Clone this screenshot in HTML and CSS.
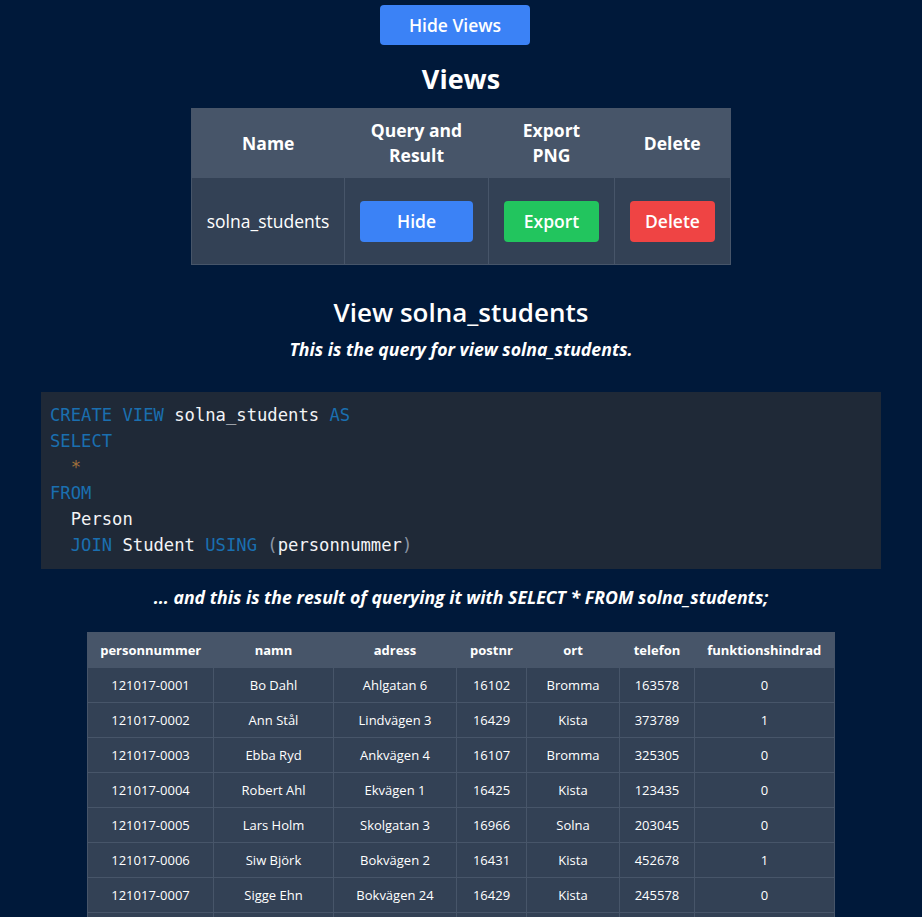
FILE: index.html
```html
<!DOCTYPE html>
<html lang="sv">
<head>
<meta charset="utf-8">
<title>Views</title>
<link rel="stylesheet" href="styles.css">
</head>
<body>
<main class="page">
  <button class="btn btn-blue btn-top">Hide Views</button>
  <h2 class="title">Views</h2>
  <table class="views">
    <colgroup>
      <col class="c-name"><col class="c-query"><col class="c-export"><col class="c-delete">
    </colgroup>
    <thead>
      <tr>
        <th>Name</th>
        <th>Query and<br>Result</th>
        <th>Export<br>PNG</th>
        <th>Delete</th>
      </tr>
    </thead>
    <tbody>
      <tr>
        <td>solna_students</td>
        <td><button class="btn btn-blue btn-cell btn-hide">Hide</button></td>
        <td><button class="btn btn-green btn-cell btn-export">Export</button></td>
        <td><button class="btn btn-red btn-cell btn-delete">Delete</button></td>
      </tr>
    </tbody>
  </table>

  <h2 class="title view-title">View solna_students</h2>
  <p class="caption">This is the query for view solna_students.</p>

  <pre class="code"><code><span class="kw">CREATE</span> <span class="kw">VIEW</span> solna_students <span class="kw">AS</span>
<span class="kw">SELECT</span>
  <span class="op">*</span>
<span class="kw">FROM</span>
  Person
  <span class="kw">JOIN</span> Student <span class="kw">USING</span> <span class="pn">(</span>personnummer<span class="pn">)</span></code></pre>

  <p class="caption caption-result">... and this is the result of querying it with SELECT * FROM solna_students;</p>

  <table class="result">
    <colgroup>
      <col class="r1"><col class="r2"><col class="r3"><col class="r4"><col class="r5"><col class="r6"><col class="r7">
    </colgroup>
    <thead>
      <tr>
        <th>personnummer</th>
        <th>namn</th>
        <th>adress</th>
        <th>postnr</th>
        <th>ort</th>
        <th>telefon</th>
        <th>funktionshindrad</th>
      </tr>
    </thead>
    <tbody>
      <tr><td>121017-0001</td><td>Bo Dahl</td><td>Ahlgatan 6</td><td>16102</td><td>Bromma</td><td>163578</td><td>0</td></tr>
      <tr><td>121017-0002</td><td>Ann Stål</td><td>Lindvägen 3</td><td>16429</td><td>Kista</td><td>373789</td><td>1</td></tr>
      <tr><td>121017-0003</td><td>Ebba Ryd</td><td>Ankvägen 4</td><td>16107</td><td>Bromma</td><td>325305</td><td>0</td></tr>
      <tr><td>121017-0004</td><td>Robert Ahl</td><td>Ekvägen 1</td><td>16425</td><td>Kista</td><td>123435</td><td>0</td></tr>
      <tr><td>121017-0005</td><td>Lars Holm</td><td>Skolgatan 3</td><td>16966</td><td>Solna</td><td>203045</td><td>0</td></tr>
      <tr><td>121017-0006</td><td>Siw Björk</td><td>Bokvägen 2</td><td>16431</td><td>Kista</td><td>452678</td><td>1</td></tr>
      <tr><td>121017-0007</td><td>Sigge Ehn</td><td>Bokvägen 24</td><td>16429</td><td>Kista</td><td>245578</td><td>0</td></tr>
      <tr><td>121017-0008</td><td>Ulla Berg</td><td>Ahlgatan 9</td><td>16102</td><td>Bromma</td><td>112233</td><td>0</td></tr>
    </tbody>
  </table>
</main>
</body>
</html>
```

FILE: styles.css
```css
* {
  box-sizing: border-box;
}

html, body {
  margin: 0;
  padding: 0;
  background: #00193a;
  color: #ffffff;
  font-family: "Open Sans", "Noto Sans", sans-serif;
  overflow: hidden;
}

.page {
  display: flex;
  flex-direction: column;
  align-items: center;
  padding: 5px 41px 40px;
}

.btn {
  border: none;
  border-radius: 4px;
  color: #ffffff;
  font-family: inherit;
  font-size: 17.5px;
  font-weight: 600;
  cursor: pointer;
  padding: 0;
}

.btn-blue { background: #3b82f6; }
.btn-green { background: #22c55e; }
.btn-red { background: #ef4444; }

.btn-top {
  width: 150px;
  height: 40px;
  margin-right: 12px;
}

.title {
  margin: 16px 0 11px;
  font-size: 27px;
  font-weight: 700;
  line-height: 36px;
}

.views {
  border-collapse: collapse;
  border: 1px solid #475569;
  font-size: 17.5px;
  table-layout: fixed;
  width: 539px;
}

.c-name { width: 153px; }
.c-query { width: 144px; }
.c-export { width: 126px; }
.c-delete { width: 116px; }

.views th {
  background: #475569;
  font-weight: 700;
  line-height: 25px;
  padding: 9px 4px;
}

.views td {
  background: #334155;
  border: 1px solid #475569;
  text-align: center;
  padding: 0 4px;
  height: 87px;
}

.btn-cell {
  height: 41px;
  display: block;
  margin: 0 auto;
}

.btn-hide { width: 113px; }
.btn-export { width: 95px; }
.btn-delete { width: 85px; }

.view-title {
  margin: 29px 0 7px;
  font-size: 26px;
  font-weight: 600;
}

.caption {
  margin: 0;
  font-size: 17.7px;
  font-weight: 700;
  font-style: italic;
  line-height: 24px;
}

.code {
  align-self: stretch;
  margin: 31px 0 0;
  background: #1f2937;
  padding: 10px 9px 11px;
  font-family: "DejaVu Sans Mono", "Liberation Mono", monospace;
  font-size: 17.2px;
  line-height: 26px;
  color: #f3f4f6;
}

.code code {
  font-family: inherit;
}

.kw { color: #1a6fb0; }
.op { color: #a0703c; }
.pn { color: #8b95a5; }

.caption-result {
  margin: 16px 0 23px;
}

.result {
  border-collapse: collapse;
  border: 1px solid #475569;
  font-size: 13px;
  table-layout: fixed;
  width: 747px;
}

.r1 { width: 126px; }
.r2 { width: 120px; }
.r3 { width: 123px; }
.r4 { width: 70px; }
.r5 { width: 93px; }
.r6 { width: 75px; }
.r7 { width: 140px; }

.result th {
  background: #475569;
  font-weight: 700;
  height: 35px;
  padding: 0 2px;
}

.result td {
  background: #334155;
  border: 1px solid #475569;
  text-align: center;
  height: 35px;
  padding: 0 2px;
}
```
